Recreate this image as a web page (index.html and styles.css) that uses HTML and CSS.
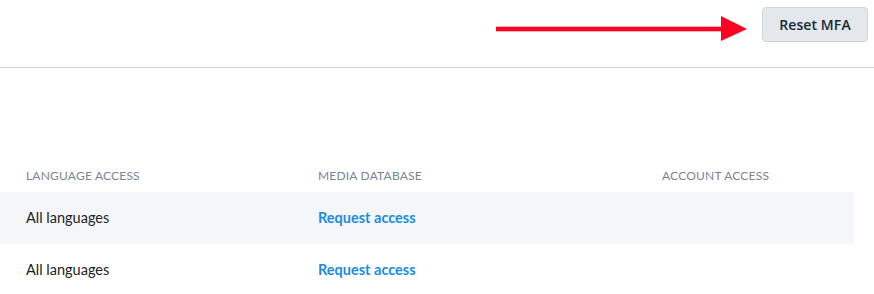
FILE: index.html
```html
<!DOCTYPE html>
<html>
<head>
<meta charset="utf-8">
<link rel="stylesheet" href="styles.css">
</head>
<body>
<header class="topbar">
  <svg class="arrow" width="252" height="26" viewBox="0 0 252 26" aria-hidden="true">
    <rect x="0" y="10.7" width="228" height="4.6" fill="#fb0421"/>
    <polygon points="225,0 251,13 225,25" fill="#fb0421"/>
  </svg>
  <button class="btn">Reset MFA</button>
</header>
<section class="table">
  <div class="row head">
    <div class="cell">Language access</div>
    <div class="cell">Media database</div>
    <div class="cell">Account access</div>
  </div>
  <div class="row body shaded">
    <div class="cell">All languages</div>
    <div class="cell"><a class="link" href="#">Request access</a></div>
    <div class="cell"></div>
  </div>
  <div class="row body">
    <div class="cell">All languages</div>
    <div class="cell"><a class="link" href="#">Request access</a></div>
    <div class="cell"></div>
  </div>
</section>
</body>
</html>
```
FILE: styles.css
```css
html, body {
  margin: 0;
  padding: 0;
  background: #ffffff;
}
body {
  font-family: Lato, "Open Sans", sans-serif;
  color: #222;
}
.topbar {
  height: 67px;
  border-bottom: 1px solid #d3d3d3;
  display: flex;
  align-items: flex-start;
  justify-content: flex-end;
  padding-right: 6px;
}
.arrow {
  margin-top: 16px;
  margin-right: 14px;
  display: block;
}
.btn {
  margin-top: 7px;
  height: 35px;
  width: 106px;
  padding: 0;
  border: 1px solid #cfd4da;
  border-radius: 4px;
  background: #e4e7eb;
  color: #1c273a;
  font-family: "Open Sans", sans-serif;
  font-weight: 600;
  font-size: 14px;
  letter-spacing: 0.1px;
}
.table {
  margin-top: 96px;
  width: 854px;
}
.row {
  display: grid;
  grid-template-columns: 292px 344px 1fr;
}
.cell {
  padding-left: 26px;
}
.head {
  height: 28px;
  align-items: start;
}
.head .cell {
  font-size: 12px;
  text-transform: uppercase;
  color: #7b8494;
  letter-spacing: 0.2px;
  line-height: 16px;
  padding-top: 4px;
}
.body {
  height: 52px;
  align-items: center;
  font-size: 14.5px;
  color: #222;
}
.body .cell {
  padding-bottom: 2px;
}
.shaded {
  background: #f5f6fa;
}
.link {
  color: #1b8ddc;
  font-weight: 700;
  text-decoration: none;
}
```
